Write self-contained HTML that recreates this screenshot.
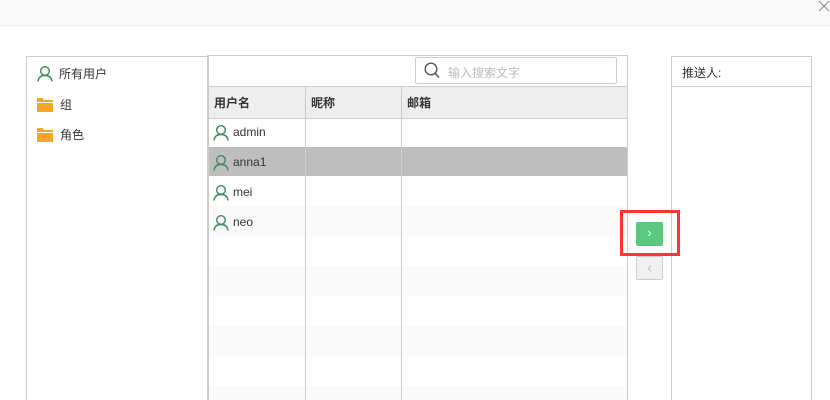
<!DOCTYPE html><html><head><meta charset="utf-8"><style>
html,body{margin:0;width:830px;height:400px;overflow:hidden}
body{background:#fff;font-family:"Liberation Sans","Noto Sans CJK SC",sans-serif;font-size:12px;color:#333;position:relative}
.a{position:absolute;box-sizing:border-box}
.row{position:absolute;left:209px;width:418px;height:30px}
.ut{position:absolute;left:213px;height:30px;display:flex;align-items:center}
</style></head><body>
<div class="a" style="left:0;top:0;width:830px;height:26px;background:#f9f9f9;border-bottom:1px solid #eee"></div>
<svg class="a" style="left:818px;top:0" width="12" height="12"><path d="M1 1L11 11M11 1L1 11" stroke="#888" stroke-width="1"/></svg>
<div class="a" style="left:26px;top:56px;width:182px;height:360px;border:1px solid #ccc;border-bottom:none"></div>
<div class="a" style="left:37px;top:65px;display:flex;align-items:center"><svg width="16" height="17"><circle cx="8" cy="6" r="4.3" fill="none" stroke="#3a8a5a" stroke-width="1.4"/><path d="M1 16.5C1.5 12 4 10.5 8 10.5S14.5 12 15 16.5" fill="none" stroke="#3a8a5a" stroke-width="1.4"/></svg><span style="margin-left:6px">所有用户</span></div>
<div class="a" style="left:37px;top:96px;display:flex;align-items:center"><svg width="16" height="14"><path d="M0 0H6V2H16V4H0Z M0 5H16V14H0Z" fill="#f5a623"/></svg><span style="margin-left:7px">组</span></div>
<div class="a" style="left:37px;top:126px;display:flex;align-items:center"><svg width="16" height="14"><path d="M0 0H6V2H16V4H0Z M0 5H16V14H0Z" fill="#f5a623"/></svg><span style="margin-left:7px">角色</span></div>
<div class="a" style="left:207px;top:55px;width:421px;height:360px;border:1px solid #ccc;border-left:2px solid #ccc;border-bottom:none"></div>
<div class="a" style="left:415px;top:57px;width:202px;height:27px;border:1px solid #ccc;border-radius:2px"></div>
<svg class="a" style="left:424px;top:62px" width="16" height="17"><circle cx="7" cy="7" r="5.8" fill="none" stroke="#555" stroke-width="1.4"/><path d="M11 11L15 15.5" stroke="#555" stroke-width="1.5"/></svg>
<div class="a" style="left:448px;top:64px;color:#bbb">输入搜索文字</div>
<div class="row" style="top:86px;height:31px;background:#eee;border-top:1px solid #ccc;border-bottom:1px solid #ccc"></div>
<div class="a" style="left:214px;top:94px;font-weight:bold">用户名</div>
<div class="a" style="left:311px;top:94px;font-weight:bold">昵称</div>
<div class="a" style="left:407px;top:94px;font-weight:bold">邮箱</div>
<div class="row" style="top:147px;height:29px;background:#bebebe"></div>
<div class="row" style="top:206px;background:#fafafa"></div>
<div class="row" style="top:266px;background:#fafafa"></div>
<div class="row" style="top:326px;background:#fafafa"></div>
<div class="row" style="top:386px;background:#fafafa"></div>
<div class="a" style="left:305px;top:86px;width:1px;height:320px;background:#ccc"></div>
<div class="a" style="left:401px;top:86px;width:1px;height:320px;background:#ccc"></div>
<div class="ut" style="top:117px"><svg width="16" height="17"><circle cx="8" cy="6" r="4.3" fill="none" stroke="#3a8a5a" stroke-width="1.4"/><path d="M1 16.5C1.5 12 4 10.5 8 10.5S14.5 12 15 16.5" fill="none" stroke="#3a8a5a" stroke-width="1.4"/></svg><span style="margin-left:4px">admin</span></div>
<div class="ut" style="top:147px"><svg width="16" height="17"><circle cx="8" cy="6" r="4.3" fill="none" stroke="#3a8a5a" stroke-width="1.4"/><path d="M1 16.5C1.5 12 4 10.5 8 10.5S14.5 12 15 16.5" fill="none" stroke="#3a8a5a" stroke-width="1.4"/></svg><span style="margin-left:4px">anna1</span></div>
<div class="ut" style="top:177px"><svg width="16" height="17"><circle cx="8" cy="6" r="4.3" fill="none" stroke="#3a8a5a" stroke-width="1.4"/><path d="M1 16.5C1.5 12 4 10.5 8 10.5S14.5 12 15 16.5" fill="none" stroke="#3a8a5a" stroke-width="1.4"/></svg><span style="margin-left:4px">mei</span></div>
<div class="ut" style="top:207px"><svg width="16" height="17"><circle cx="8" cy="6" r="4.3" fill="none" stroke="#3a8a5a" stroke-width="1.4"/><path d="M1 16.5C1.5 12 4 10.5 8 10.5S14.5 12 15 16.5" fill="none" stroke="#3a8a5a" stroke-width="1.4"/></svg><span style="margin-left:4px">neo</span></div>
<div class="a" style="left:671px;top:56px;width:141px;height:360px;border:1px solid #ccc;border-bottom:none"></div>
<div class="a" style="left:671px;top:86px;width:141px;height:1px;background:#ccc"></div>
<div class="a" style="left:682px;top:64px">推送人:</div>
<div class="a" style="left:620px;top:210px;width:60px;height:46px;border:3px solid #f33"></div>
<div class="a" style="left:636px;top:222px;width:27px;height:24px;background:#5bc87f;border-radius:2px;color:#fff;text-align:center;line-height:22px;font-size:13px">›</div>
<div class="a" style="left:636px;top:256px;width:27px;height:24px;background:#f0f0f0;border:1px solid #ccc;border-radius:2px;color:#bbb;text-align:center;line-height:21px;font-size:13px">‹</div>
</body></html>
